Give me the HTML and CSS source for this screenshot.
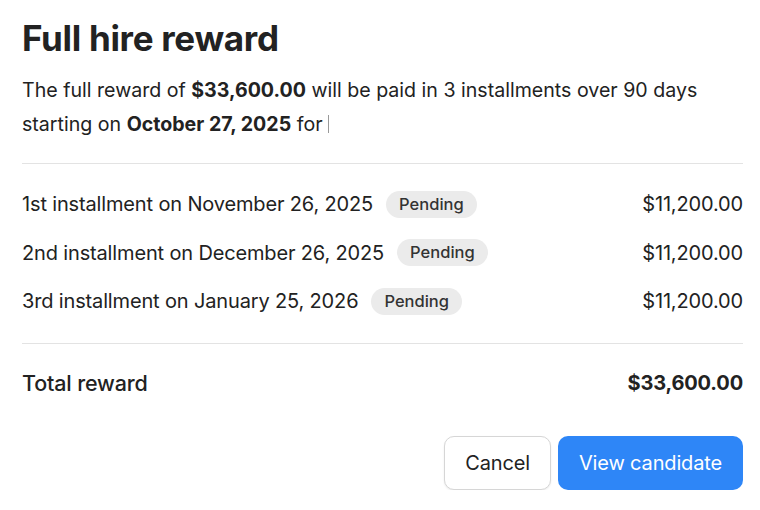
FILE: index.html
```html
<!DOCTYPE html>
<html lang="en">
<head>
    <meta charset="UTF-8">
    <meta name="viewport" content="width=device-width, initial-scale=1.0">
    <title>Full hire reward</title>
    <link rel="stylesheet" href="styles.css">
</head>
<body>

<section class="modal">
    <h1>Full hire reward</h1>
    <p class="intro">The full reward of <b>$33,600.00</b> will be paid in 3 installments over 90 days starting on <b>October 27, 2025</b> for <span class="caret"></span></p>

    <div class="installments">
        <div class="row">
            <div class="label">1st installment on November 26, 2025 <span class="pill">Pending</span></div>
            <div class="amount">$11,200.00</div>
        </div>
        <div class="row">
            <div class="label">2nd installment on December 26, 2025 <span class="pill">Pending</span></div>
            <div class="amount">$11,200.00</div>
        </div>
        <div class="row">
            <div class="label">3rd installment on January 25, 2026 <span class="pill">Pending</span></div>
            <div class="amount">$11,200.00</div>
        </div>
    </div>

    <div class="total">
        <div>Total reward</div>
        <div class="total-amount">$33,600.00</div>
    </div>

    <div class="actions">
        <button class="btn btn-cancel">Cancel</button>
        <button class="btn btn-primary">View candidate</button>
    </div>
</section>

</body>
</html>
```

FILE: styles.css
```css
body { font-family: Inter, "Noto Sans", sans-serif; color: #222; background: #fff; margin: 0; padding: 0; letter-spacing: -0.15px; }
.modal { padding: 17px 17px 0 22px; }
h1 { font-size: 35px; font-weight: 700; line-height: 42px; margin: 0 0 14px; letter-spacing: -0.3px; }
.intro { font-size: 19.6px; line-height: 34px; margin: 0; padding-bottom: 22px; border-bottom: 1px solid #e3e3e3; letter-spacing: 0; }
.intro b { font-weight: 700; }
.caret { display: inline-block; width: 1px; height: 18px; background: #999; vertical-align: -2px; }
.installments { padding: 16px 0 17px; border-bottom: 1px solid #e3e3e3; }
.row { display: flex; justify-content: space-between; align-items: center; height: 48.5px; font-size: 20px; }
.label { display: flex; align-items: center; gap: 13px; }
.pill { background: #ebebeb; border-radius: 14px; padding: 3px 13px 4px; font-size: 16.5px; font-weight: 500; color: #333; letter-spacing: 0; }
.total { display: flex; justify-content: space-between; align-items: center; font-size: 21.5px; font-weight: 500; padding: 26px 0 40px; }
.total-amount { font-weight: 700; font-size: 20px; }
.actions { display: flex; justify-content: flex-end; gap: 7px; }
.btn { font-family: inherit; font-size: 20px; height: 54px; border-radius: 10px; padding: 0 20px; letter-spacing: -0.15px; }
.btn-cancel { background: #fff; color: #222; border: 1px solid #d6d6d6; box-shadow: 0 1px 2px rgba(0, 0, 0, 0.08); }
.btn-primary { background: #2e86f7; color: #fff; border: none; padding: 0 21px; }
```
